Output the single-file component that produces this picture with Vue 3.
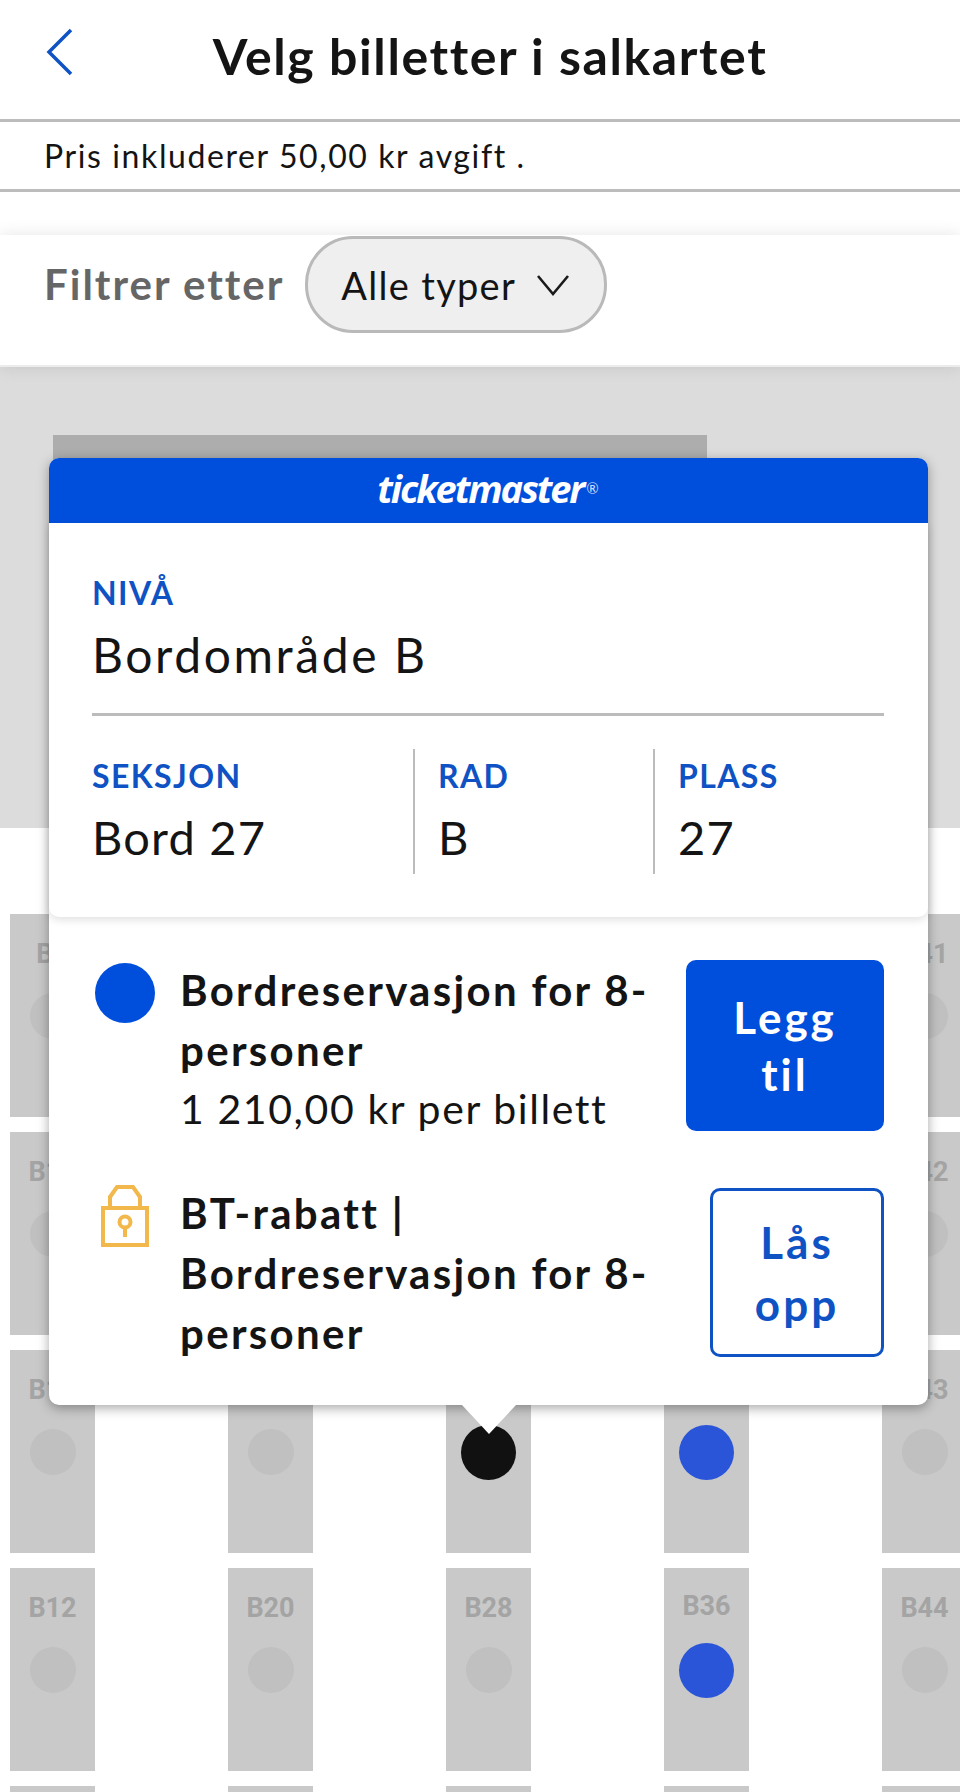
<script setup>
const columns = [
  { start: 9, blue: [] },
  { start: 17, blue: [] },
  { start: 25, blue: [], black: [27] },
  { start: 33, blue: [35, 36] },
  { start: 41, blue: [] }
]

// seats run top to bottom in each column, so row 0 is B9, B17, ...
// the popup covers the labels of the middle columns in the first three rows
const seats = []
for (let row = 0; row < 4; row++) {
  columns.forEach((col, i) => {
    const num = col.start + row
    let state = 'free'
    if (col.blue.includes(num)) state = 'blue'
    if (col.black && col.black.includes(num)) state = 'black'
    const covered = row < 3 && i > 0 && i < 4
    seats.push({ id: 'B' + num, state, covered })
  })
}
</script>

<template>
  <div class="screen">
    <header class="topbar">
      <svg class="back" width="28" height="48" viewBox="0 0 28 48">
        <path d="M25 2 L3 24 L25 46" fill="none" stroke="#0f52c4" stroke-width="3.5" />
      </svg>
      <h1>Velg billetter i salkartet</h1>
    </header>
    <div class="fee">Pris inkluderer 50,00 kr avgift .</div>
    <div class="filter">
      <span class="filter-label">Filtrer etter</span>
      <button class="pill">
        Alle typer
        <svg width="34" height="24" viewBox="0 0 34 24">
          <path d="M2 3 L17 21 L32 3" fill="none" stroke="#1a1a1a" stroke-width="2.6" />
        </svg>
      </button>
    </div>

    <div class="band">
      <div class="stage"></div>
    </div>

    <div class="seat-grid">
      <div v-for="seat in seats" :key="seat.id" class="seat" :class="seat.state">
        <span class="seat-id" :class="{ covered: seat.covered }">{{ seat.covered ? '' : seat.id }}</span>
        <span class="dot"></span>
      </div>
      <div v-for="col in columns" :key="col.start" class="seat"></div>
    </div>

    <div class="popup">
      <div class="brand">
        <span class="logo">ticketmaster</span><span class="reg">®</span>
      </div>
      <div class="info">
        <div class="small-label">NIVÅ</div>
        <div class="big-value wide">Bordområde B</div>
        <div class="info-row">
          <div class="cell seksjon">
            <div class="small-label">SEKSJON</div>
            <div class="big-value">Bord 27</div>
          </div>
          <div class="cell rad">
            <div class="small-label">RAD</div>
            <div class="big-value">B</div>
          </div>
          <div class="cell plass">
            <div class="small-label">PLASS</div>
            <div class="big-value">27</div>
          </div>
        </div>
      </div>

      <div class="offers">
        <div class="offer first">
          <div class="offer-icon"><span class="blue-dot"></span></div>
          <div class="offer-text">
            <strong>Bordreservasjon for 8-personer</strong>
            <span>1 210,00 kr per billett</span>
          </div>
          <button class="add">Legg til</button>
        </div>
        <div class="offer second">
          <div class="offer-icon">
            <svg class="lock" width="48" height="62" viewBox="0 0 48 62">
              <g fill="none" stroke="#f2b84b" stroke-width="4">
                <rect x="2" y="23" width="44" height="37" />
                <path d="M9 23 V12 L16 2 H32 L39 12 V23" />
                <circle cx="24" cy="37" r="5.5" />
                <path d="M24 42 V52" />
              </g>
            </svg>
          </div>
          <div class="offer-text">
            <strong>BT-rabatt | Bordreservasjon for 8-personer</strong>
          </div>
          <button class="unlock">Lås opp</button>
        </div>
      </div>
      <span class="arrow"></span>
    </div>
  </div>
</template>

<style scoped>
.screen {
  position: relative;
  width: 960px;
  height: 1792px;
  overflow: hidden;
  background: #fff;
  font-family: Lato, "Open Sans", sans-serif;
  color: #141414;
}

.topbar {
  height: 119px;
  position: relative;
  display: flex;
  align-items: center;
  justify-content: center;
  border-bottom: 3px solid #bcbcbc;
}

.topbar h1 {
  margin: 0 0 7px 20px;
  font-size: 50px;
  font-weight: 700;
  letter-spacing: 1.6px;
}

.back {
  position: absolute;
  left: 46px;
  top: 28px;
}

.fee {
  height: 70px;
  box-sizing: border-box;
  padding: 14px 0 0 44px;
  font-size: 32px;
  letter-spacing: 1.6px;
  border-bottom: 3px solid #bcbcbc;
}

.filter {
  margin-top: 43px;
  height: 132px;
  box-sizing: border-box;
  padding: 1px 0 0 44px;
  display: flex;
  align-items: flex-start;
  gap: 21px;
  background: #fff;
  position: relative;
  border-bottom: 2px solid #ececec;
  box-shadow: 0 0 16px rgba(0, 0, 0, 0.1);
}

.filter-label {
  font-size: 42px;
  line-height: 97px;
  font-weight: 700;
  letter-spacing: 2px;
  color: #666;
}

.pill {
  width: 302px;
  height: 97px;
  border: 3px solid #b9b9b9;
  border-radius: 48px;
  background: #efefef;
  display: flex;
  align-items: center;
  gap: 20px;
  padding: 0 0 0 33px;
  font: inherit;
  font-size: 38px;
  letter-spacing: 1.3px;
  color: #141414;
}

.band {
  height: 461px;
  background: #dcdcdc;
  padding: 68px 0 0 53px;
  box-sizing: border-box;
}

.stage {
  width: 654px;
  height: 120px;
  background: #adadad;
}

.seat-grid {
  margin: 86px 0 0 10px;
  display: grid;
  grid-template-columns: repeat(5, 85px);
  grid-auto-rows: 203px;
  column-gap: 133px;
  row-gap: 15px;
}

.seat {
  background: #c9c9c9;
  display: flex;
  flex-direction: column;
  align-items: center;
  padding-top: 26px;
  box-sizing: border-box;
}

.seat-id {
  font-family: Roboto, sans-serif;
  font-size: 27px;
  line-height: 28px;
  height: 28px;
  font-weight: 700;
  color: #a4a4a4;
}

.dot {
  width: 46px;
  height: 46px;
  margin-top: 25px;
  border-radius: 50%;
  background: #c0c0c0;
}

.seat.blue .dot,
.seat.black .dot {
  width: 55px;
  height: 55px;
  margin-top: 21px;
}

.seat.blue .seat-id {
  transform: translateY(-2px);
}

.seat.blue .dot {
  background: #2b55d8;
}

.seat.black .dot {
  background: #111;
}

.popup {
  position: absolute;
  left: 49px;
  top: 458px;
  width: 879px;
  height: 947px;
  background: #fff;
  border-radius: 10px;
  box-shadow: 0 3px 12px rgba(0, 0, 0, 0.35);
}

.brand {
  height: 65px;
  background: #004fdc;
  border-radius: 10px 10px 0 0;
  color: #fff;
  display: flex;
  align-items: center;
  justify-content: center;
  padding: 0 1px 6px 0;
  box-sizing: border-box;
}

.logo {
  font-family: "Open Sans", sans-serif;
  font-size: 38px;
  font-style: italic;
  font-weight: 700;
  letter-spacing: -2.1px;
}

.reg {
  font-size: 15px;
  margin-left: 3px;
  color: #cfdcf8;
}

.info {
  height: 394px;
  box-sizing: border-box;
  padding: 50px 44px 0 43px;
  border-radius: 0 0 10px 10px;
  box-shadow: 0 3px 8px rgba(0, 0, 0, 0.12);
}

.small-label {
  font-size: 32px;
  line-height: 40px;
  font-weight: 700;
  letter-spacing: 1.4px;
  color: #0f52c4;
}

.big-value {
  font-size: 47px;
  line-height: 60px;
  margin-top: 10px;
  letter-spacing: 1.2px;
  color: #141414;
}

.big-value.wide {
  font-size: 48px;
  margin-top: 12px;
  letter-spacing: 2.6px;
}

.info-row {
  margin-top: 28px;
  padding-top: 33px;
  display: flex;
  border-top: 3px solid #bcbcbc;
}

.cell {
  height: 125px;
  box-sizing: border-box;
  padding-top: 7px;
}

.cell .big-value {
  margin-top: 11px;
}

.seksjon {
  width: 321px;
}

.rad {
  width: 240px;
  padding-left: 23px;
  border-left: 2px solid #bcbcbc;
}

.plass {
  padding-left: 23px;
  border-left: 2px solid #bcbcbc;
}

.offers {
  padding: 43px 44px 0 46px;
}

.offer {
  display: flex;
  align-items: flex-start;
}

.offer.second {
  margin-top: 46px;
}

.offer-icon {
  width: 85px;
  flex: none;
}

.blue-dot {
  display: block;
  width: 60px;
  height: 60px;
  margin-top: 3px;
  border-radius: 50%;
  background: #004fdc;
}

.lock {
  display: block;
  margin-left: 6px;
  margin-top: 2px;
}

.offer-text {
  width: 495px;
  flex: none;
  display: flex;
  flex-direction: column;
  font-size: 42px;
  line-height: 60px;
  letter-spacing: 2.3px;
}

.offer-text strong {
  font-weight: 700;
}

.offer-text span {
  font-size: 41px;
  line-height: 57px;
  letter-spacing: 1.6px;
}

.add,
.unlock {
  border-radius: 10px;
  font: inherit;
  font-size: 44px;
  font-weight: 700;
  letter-spacing: 3px;
  padding: 0 30px;
}

.add {
  width: 198px;
  height: 171px;
  line-height: 57px;
  margin-left: auto;
  margin-top: 0;
  border: none;
  background: #004fdc;
  color: #fff;
}

.unlock {
  width: 174px;
  height: 169px;
  line-height: 62px;
  margin-left: auto;
  margin-top: 5px;
  border: 3px solid #0f52c4;
  background: #fff;
  color: #0f52c4;
}

.arrow {
  position: absolute;
  left: 413px;
  top: 947px;
  border-left: 27px solid transparent;
  border-right: 27px solid transparent;
  border-top: 29px solid #fff;
}
</style>

<style>
html,
body {
  margin: 0;
  background: #fff;
}
</style>
